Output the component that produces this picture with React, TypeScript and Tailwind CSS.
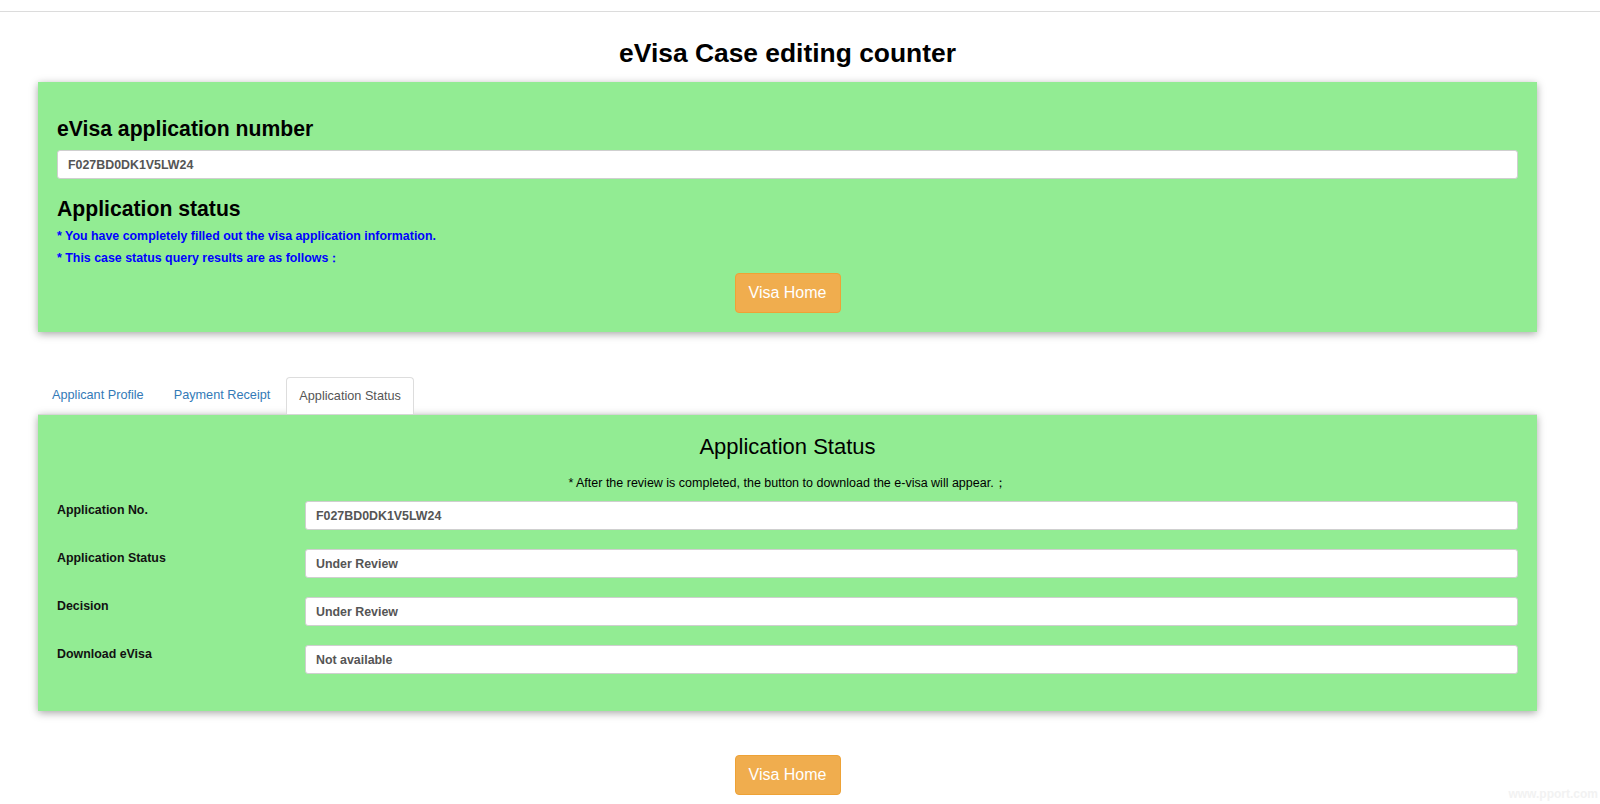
import { useState } from "react";

const rows = [
  { label: "Application No.", value: "F027BD0DK1V5LW24" },
  { label: "Application Status", value: "Under Review" },
  { label: "Decision", value: "Under Review" },
  { label: "Download eVisa", value: "Not available" },
];

const tabs = ["Applicant Profile", "Payment Receipt", "Application Status"];

const VisaHomeButton = () => (
  <button className="h-[40px] w-[106px] rounded-[4px] border border-[#eea236] bg-[#f0ad4e] text-[16px] text-white">
    Visa Home
  </button>
);

const App = () => {
  const [activeTab, setActiveTab] = useState<string>("Application Status");

  return (
    <div className="relative min-h-[804px] w-full bg-white font-['Liberation_Sans',Arial,sans-serif] text-[#000]">
      <div className="h-[12px] border-b border-[#dcdcdc]" />

      <div className="ml-[38px] w-[1499px]">
        {/* Title */}
        <h1 className="mt-[27px] text-center text-[26.4px] font-bold leading-[29px]">
          eVisa Case editing counter
        </h1>

        {/* Search panel */}
        <section className="mt-[14px] bg-[#92ec93] px-[19px] pt-[35px] pb-[19px] shadow-[0_2px_8px_rgba(0,0,0,0.35)]">
          <h3 className="text-[21.2px] font-bold leading-[24px]">eVisa application number</h3>
          <input
            readOnly
            value="F027BD0DK1V5LW24"
            className="mt-[9px] h-[29px] w-full rounded-[3px] border border-[#cfcfcf] bg-white px-[10px] text-[12.4px] font-bold text-[#555]"
          />
          <h3 className="mt-[18px] text-[21.2px] font-bold leading-[24px]">Application status</h3>
          <p className="mt-[4px] text-[12.4px] font-bold leading-[22px] text-[#0000ff]">
            * You have completely filled out the visa application information.
          </p>
          <p className="text-[12.4px] font-bold leading-[22px] text-[#0000ff]">
            * This case status query results are as follows：
          </p>
          <div className="mt-[4px] flex justify-center">
            <VisaHomeButton />
          </div>
        </section>

        {/* Tabs */}
        <ul className="mt-[45px] flex h-[37px] items-end">
          {tabs.map((tab) => (
            <li key={tab} className="mr-[2px]">
              <button
                onClick={() => setActiveTab(tab)}
                className={
                  activeTab === tab
                    ? "h-[37px] rounded-t-[4px] border border-b-0 border-[#dddddd] bg-white px-[12px] pt-[1px] text-[12.7px] text-[#555]"
                    : "h-[37px] px-[14px] pt-[1px] text-[12.7px] text-[#337ab7]"
                }
              >
                {tab}
              </button>
            </li>
          ))}
        </ul>

        {/* Status panel */}
        <section className="border-t border-[#d6d6d6] bg-[#92ec93] px-[19px] pt-[20px] pb-[37px] shadow-[0_2px_8px_rgba(0,0,0,0.35)]">
          <h3 className="text-center text-[22px] leading-[24px]">Application Status</h3>
          <p className="mt-[16px] text-center text-[12.5px] leading-[16px]">
            * After the review is completed, the button to download the e-visa will appear.；
          </p>
          <div className="mt-[10px] flex flex-col gap-[19px]">
            {rows.map((row) => (
              <div key={row.label} className="flex items-start">
                <label className="w-[248px] shrink-0 pt-[1px] text-[12.4px] font-bold leading-[16px] text-[#111]">
                  {row.label}
                </label>
                <input
                  readOnly
                  value={row.value}
                  className="h-[29px] flex-1 rounded-[3px] border border-[#cfcfcf] bg-white px-[10px] text-[12.4px] font-bold text-[#555]"
                />
              </div>
            ))}
          </div>
        </section>

        <div className="mt-[44px] flex justify-center">
          <VisaHomeButton />
        </div>
      </div>

      <span className="absolute right-[2px] bottom-[1px] text-[12px] font-bold text-[#f2f2f2]">
        www.pport.com
      </span>
    </div>
  );
};

export default App;
